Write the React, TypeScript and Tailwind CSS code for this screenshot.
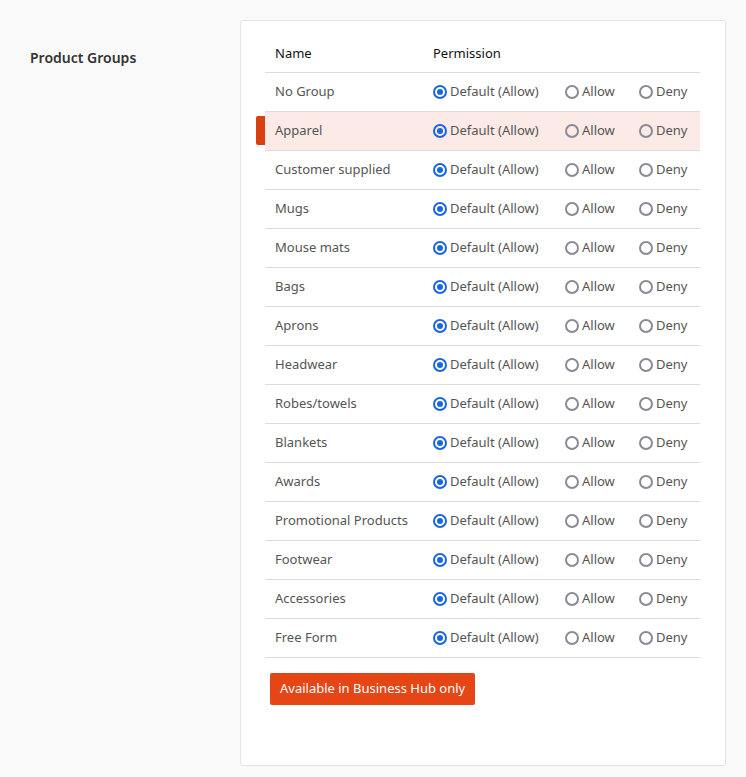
const GROUPS = ['No Group', 'Apparel', 'Customer supplied', 'Mugs', 'Mouse mats', 'Bags', 'Aprons', 'Headwear', 'Robes/towels', 'Blankets', 'Awards', 'Promotional Products', 'Footwear', 'Accessories', 'Free Form']

function Radio({ checked, label }: { checked?: boolean; label: string }) {
  return (
    <span className="flex items-center gap-[3px]">
      {checked ? (
        <span className="flex h-[14px] w-[14px] items-center justify-center rounded-full border-2 border-[#1a66e0]">
          <span className="h-[6px] w-[6px] rounded-full bg-[#1a66e0]" />
        </span>
      ) : (
        <span className="h-[14px] w-[14px] rounded-full border-2 border-[#8a8a96]" />
      )}
      {label}
    </span>
  )
}

export default function App() {
  return (
    <div className="min-h-[777px] bg-[#f9f9f9] font-['Roboto',sans-serif] text-[13px]">
      <div className="flex pt-5">
        <div className="w-[240px] pl-[30px] pt-[27px] text-[14px] font-semibold text-[#333]">Product Groups</div>
        <div className="h-[746px] w-[486px] rounded-[3px] border border-[#e4e4e4] bg-white pl-[24px] pr-[25px] pt-[14px]">
          <div className="grid h-[38px] grid-cols-[158px_132px_74px_1fr] items-center border-b border-[#dcdcdc] pl-[10px] text-[#111]">
            <span>Name</span>
            <span>Permission</span>
          </div>
          {GROUPS.map((g) => (
            <div
              key={g}
              className={`relative grid h-[39px] grid-cols-[158px_132px_74px_1fr] items-center border-b border-[#dcdcdc] pl-[10px] text-[#555] ${g === 'Apparel' ? 'bg-[#fbeae6]' : ''}`}
            >
              {g === 'Apparel' && <span className="absolute left-[-9px] top-[4px] h-[29px] w-[9px] rounded-l-[2px] bg-[#d8400f]" />}
              <span>{g}</span>
              <Radio checked label="Default (Allow)" />
              <Radio label="Allow" />
              <Radio label="Deny" />
            </div>
          ))}
          <button className="ml-[5px] mt-[15px] h-[32px] rounded-[2px] bg-[#e64516] px-[10px] text-[13px] text-white">
            Available in Business Hub only
          </button>
        </div>
      </div>
    </div>
  )
}
